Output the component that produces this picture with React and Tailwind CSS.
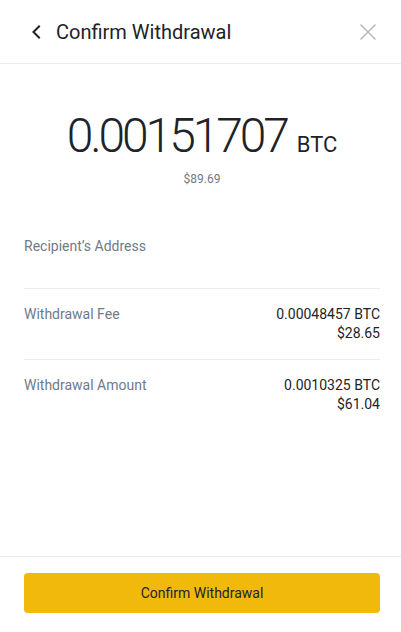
import React from "react";

function Chevron() {
  return (
    <svg width="12" height="14" viewBox="0 0 12 14" fill="none" className="block">
      <path d="M9 1.5L3.5 7L9 12.5" stroke="#1e2329" strokeWidth="2" strokeLinecap="square" />
    </svg>
  );
}

function CloseIcon() {
  return (
    <svg width="18" height="18" viewBox="0 0 18 18" fill="none" className="block">
      <path d="M1.5 1.5L16.5 16.5M16.5 1.5L1.5 16.5" stroke="#b7bdc6" strokeWidth="1.6" />
    </svg>
  );
}

function Row({ label, value, sub }) {
  return (
    <div className="flex justify-between border-t border-[#eaecef] pt-[16px] pb-[16px] text-[14px] leading-[19px]">
      <div className="text-[#707a8a]">{label}</div>
      <div className="text-right text-[#1e2329]">
        <div>{value}</div>
        <div>{sub}</div>
      </div>
    </div>
  );
}

export default function App() {
  return (
    <div
      className="flex h-[632px] w-[401px] flex-col bg-white"
      style={{ fontFamily: "Roboto, 'Liberation Sans', sans-serif" }}
    >
      <header className="flex h-16 shrink-0 items-center border-b border-[#eaecef] pl-[30px] pr-[24px]">
        <Chevron />
        <div className="ml-[14px] text-[20px] leading-[28px] text-[#1e2329]">Confirm Withdrawal</div>
        <div className="ml-auto">
          <CloseIcon />
        </div>
      </header>

      <main className="flex flex-1 flex-col pl-6 pr-[21px]">
        <div className="mt-[44px] flex items-baseline justify-center">
          <span className="text-[48px] font-light leading-[56px] tracking-[-3.1px] text-[#1e2329]">0.00151707</span>
          <span className="ml-[10px] text-[22px] leading-[28px] text-[#1e2329]">BTC</span>
        </div>
        <div className="mt-[7px] text-center text-[12px] leading-[16px] text-[#707a8a]">$89.69</div>

        <div className="mt-[49px] pb-[32px] text-[14px] leading-[20px] text-[#707a8a]">Recipient’s Address</div>

        <Row label="Withdrawal Fee" value="0.00048457 BTC" sub="$28.65" />
        <Row label="Withdrawal Amount" value="0.0010325 BTC" sub="$61.04" />
      </main>

      <footer className="shrink-0 border-t border-[#eaecef] pl-6 pr-[21px] pt-4 pb-[19px]">
        <button className="flex h-10 w-full items-center justify-center rounded-[4px] bg-[#f0b90b] text-[14px] font-normal text-[#1e2329]">
          Confirm Withdrawal
        </button>
      </footer>
    </div>
  );
}
